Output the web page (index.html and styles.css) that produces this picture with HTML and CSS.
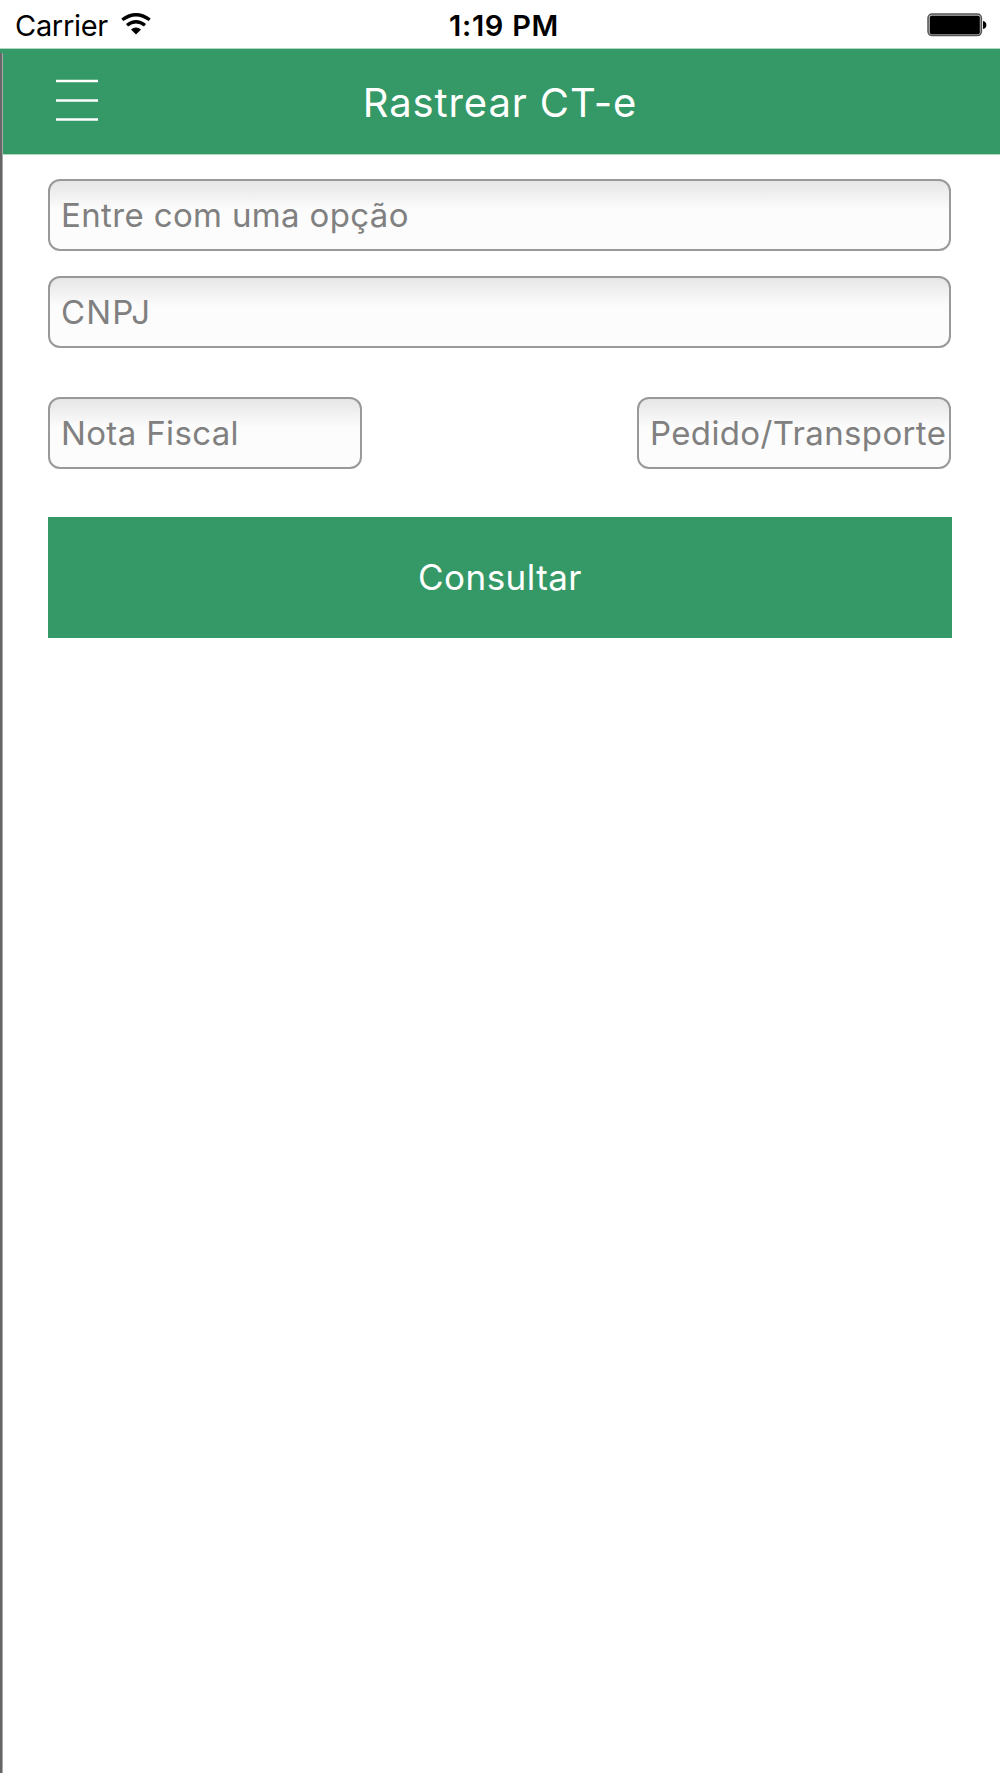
FILE: index.html
```html
<!DOCTYPE html>
<html lang="pt-BR">

<head>
    <meta charset="UTF-8" />
    <meta name="viewport" content="width=device-width, initial-scale=1" />
    <title>Rastrear CT-e</title>
    <link rel="stylesheet" href="styles.css">
</head>

<body>
    <div class="status-bar">
        <div class="carrier">
            <span>Carrier</span>
            <svg class="wifi" width="30" height="22" viewBox="0 0 30 22">
                <path d="M1.3 6.8 Q15 -3.4 28.7 6.8" fill="none" stroke="#000" stroke-width="3.3" />
                <path d="M6 12.2 Q15 5.2 24 12.2" fill="none" stroke="#000" stroke-width="3.3" />
                <path d="M10 16.6 Q15 12.4 20 16.6 L15 21.6 Z" />
            </svg>
        </div>
        <div class="clock">1:19 PM</div>
        <svg class="battery" width="60" height="24" viewBox="0 0 60 24">
            <rect x="1" y="1" width="53.4" height="21.6" rx="4" fill="#bbb" stroke="#555" stroke-width="1.5" />
            <rect x="2.8" y="2.8" width="50" height="18.4" rx="2" />
            <path d="M56 8 Q59.4 8.8 59.4 12 Q59.4 15.2 56 16 Z" />
        </svg>
    </div>

    <header class="navbar">
        <button type="button" class="menu-btn" aria-label="Menu">
            <svg width="42" height="43" viewBox="0 0 42 43">
                <path d="M0 2H42M0 21.4H42M0 40.6H42" stroke="#fff" stroke-width="2.5" />
            </svg>
        </button>
        <h1>Rastrear CT-e</h1>
    </header>

    <form id="rastrearForm">
        <input type="text" name="opcao" placeholder="Entre com uma opção" />
        <input type="text" name="cnpj" class="cnpj" placeholder="CNPJ" />
        <div class="row">
            <input type="text" name="notaFiscal" placeholder="Nota Fiscal" />
            <input type="text" name="pedido" placeholder="Pedido/Transporte" />
        </div>
        <button type="submit" class="submit-btn">Consultar</button>
    </form>

    <div class="side-edge"></div>
</body>

</html>
```
FILE: styles.css
```css
* {
    box-sizing: border-box;
}

body {
    margin: 0;
    min-height: 1778px;
    background-color: #fff;
    font-family: Inter, "Open Sans", sans-serif;
}

.status-bar {
    display: grid;
    grid-template-columns: 1fr auto 1fr;
    align-items: center;
    height: 48px;
    padding: 2px 13px 0 15px;
    font-size: 29px;
    color: #000;
}

.carrier {
    display: flex;
    align-items: center;
    gap: 13px;
    letter-spacing: -0.3px;
}

.wifi {
    display: block;
    margin-top: -3px;
}

.clock {
    padding-left: 6px;
    font-weight: 600;
    letter-spacing: 0.7px;
}

.battery {
    display: block;
    justify-self: end;
}

.navbar {
    display: grid;
    grid-template-columns: 1fr auto 1fr;
    align-items: center;
    height: 107px;
    padding: 0 56px;
    border-top: 1px solid #b0d9c4;
    border-bottom: 1px solid #b0d9c4;
    background-color: #349966;
    color: #fff;
}

.navbar h1 {
    margin: 0;
    padding-top: 1px;
    font-size: 40px;
    font-weight: 400;
    letter-spacing: 0.88px;
}

.menu-btn {
    align-self: start;
    width: 42px;
    margin-top: 30px;
    padding: 0;
    border: none;
    background: none;
}

.menu-btn svg {
    display: block;
}

form {
    padding: 24px 48px 0;
}

input[type="text"] {
    display: block;
    width: 903px;
    height: 72px;
    margin-bottom: 25px;
    padding: 0 0 0 11px;
    border: 2px solid #999;
    border-radius: 12px;
    background: linear-gradient(#e6e6e6, #fcfcfc 42%);
    font-family: inherit;
    font-size: 33px;
    letter-spacing: 0.36px;
}

input[type="text"].cnpj {
    letter-spacing: 1.1px;
}

input::placeholder {
    color: #808080;
    opacity: 1;
}

.row {
    display: flex;
    justify-content: space-between;
    width: 903px;
    padding-top: 24px;
}

.row input[type="text"] {
    width: 314px;
}

.submit-btn {
    display: block;
    width: 100%;
    height: 121px;
    margin-top: 23px;
    padding-bottom: 2px;
    border: none;
    background-color: #349966;
    color: #fff;
    font-family: inherit;
    font-size: 35px;
    letter-spacing: 0.45px;
}

/* edge of the side menu showing behind the page */
.side-edge {
    position: absolute;
    top: 53px;
    left: 0;
    width: 3px;
    height: 1720px;
    border-right: 1px solid #aaa;
    background-color: #666;
}
```
